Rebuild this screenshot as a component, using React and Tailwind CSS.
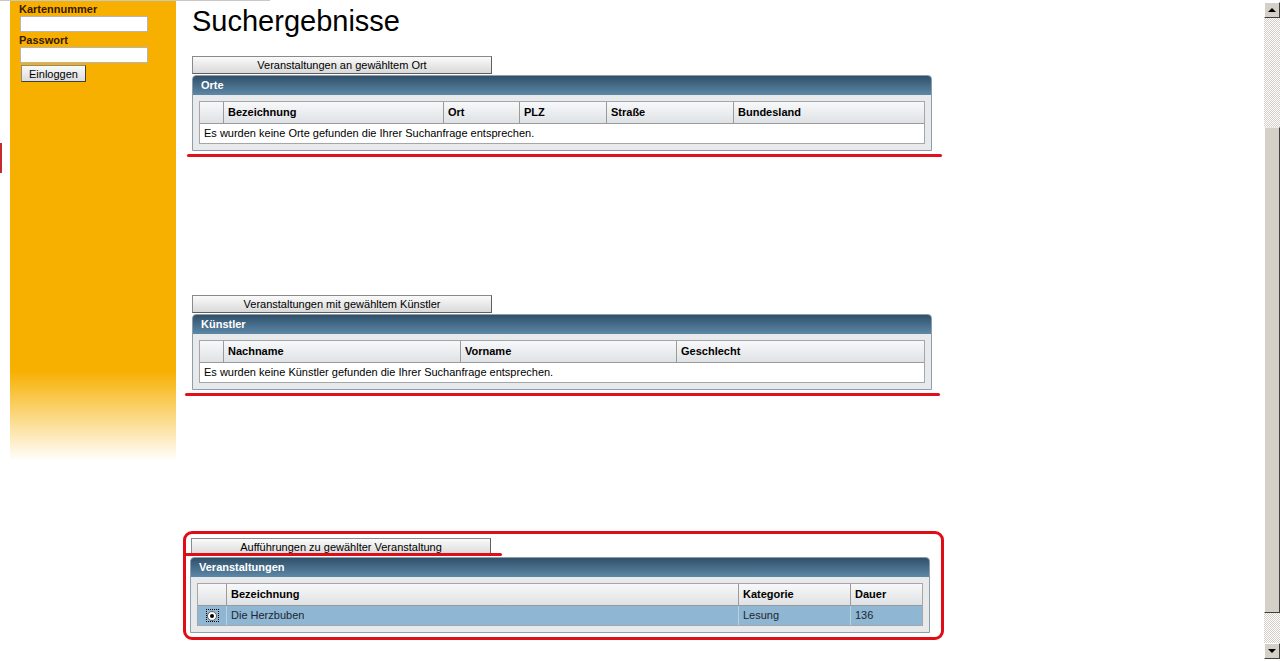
import React from 'react';

const orte = [
  { label: 'Bezeichnung', w: 'w-[220px]' },
  { label: 'Ort', w: 'w-[76px]' },
  { label: 'PLZ', w: 'w-[87px]' },
  { label: 'Straße', w: 'w-[127px]' },
  { label: 'Bundesland', w: 'flex-1' },
];

const kuenstler = [
  { label: 'Nachname', w: 'w-[237px]' },
  { label: 'Vorname', w: 'w-[216px]' },
  { label: 'Geschlecht', w: 'flex-1' },
];

const veranstaltungen = [
  { label: 'Bezeichnung', w: 'w-[512px]' },
  { label: 'Kategorie', w: 'w-[112px]' },
  { label: 'Dauer', w: 'flex-1' },
];

function ActionButton({ children }) {
  return (
    <button
      type="button"
      className="block w-[300px] h-[18px] text-[11px] leading-[16px] text-black bg-[linear-gradient(to_bottom,#fafafa,#d9d9d9)] border border-[#8a8a8a] border-b-[#5f5f5f] border-r-[#5f5f5f]"
    >
      {children}
    </button>
  );
}

function HeaderRow({ cols, first = 'w-[23px]' }) {
  return (
    <div className="flex h-[22px] border-b border-[#9a9a9a] bg-[linear-gradient(to_bottom,#f7f8f9,#dfe2e5)]">
      <div className={`${first} shrink-0`} />
      {cols.map((c) => (
        <div
          key={c.label}
          className={`${c.w} shrink-0 border-l border-[#9a9a9a] pl-[4px] text-[11px] font-bold leading-[21px] text-black`}
        >
          {c.label}
        </div>
      ))}
    </div>
  );
}

function Panel({ title, children }) {
  return (
    <div className="w-[740px] border border-[#8e9dab] rounded-t-[4px] bg-[#e7e9eb]">
      <div className="h-[19px] rounded-t-[3px] bg-[linear-gradient(to_bottom,#30506a,#5d88a7)] pl-[8px] text-[11px] font-bold leading-[18px] text-white">
        {title}
      </div>
      <div className="px-[6px] pt-[6px] pb-[6px]">{children}</div>
    </div>
  );
}

function EmptyTable({ cols, message }) {
  return (
    <div className="border border-[#a3a7ab] bg-white">
      <HeaderRow cols={cols} />
      <div className="h-[19px] pl-[4px] text-[11px] leading-[19px] text-black">{message}</div>
    </div>
  );
}

function RedLine({ offset }) {
  return <div className={`mt-[3px] ${offset} h-[3px] w-[755px] rounded-full bg-[#e1111b]`} />;
}

function Scrollbar() {
  return (
    <div className="flex w-[16px] flex-col pt-[2px]">
      <div className="flex h-[16px] items-center justify-center border border-t-white border-l-white border-b-[#404040] border-r-[#404040] bg-[#d4d0c8]">
        <div className="h-0 w-0 border-x-[4px] border-b-[4px] border-x-transparent border-b-black" />
      </div>
      <div className="h-[109px] bg-[repeating-conic-gradient(#d4d0c8_0_25%,#ffffff_0_50%)] bg-[length:2px_2px]" />
      <div className="h-[486px] border border-t-[#ece9e2] border-l-white border-b-[#404040] border-r-[#404040] bg-[#d4d0c8]" />
      <div className="h-[30px] bg-[repeating-conic-gradient(#d4d0c8_0_25%,#ffffff_0_50%)] bg-[length:2px_2px]" />
      <div className="flex h-[16px] items-center justify-center border border-t-white border-l-white border-b-[#404040] border-r-[#404040] bg-[#d4d0c8]">
        <div className="h-0 w-0 border-x-[4px] border-t-[4px] border-x-transparent border-t-black" />
      </div>
    </div>
  );
}

export default function App() {
  return (
    <div className="flex h-[661px] w-[1280px] overflow-hidden bg-white font-['Liberation_Sans',Arial,sans-serif]">
      <div className="flex flex-1 flex-col">
        <div className="h-[1px] w-[270px] bg-[#c8c8c8]" />
        <div className="flex flex-1">
          <div className="w-[10px] shrink-0 pt-[142px]">
            <div className="h-[30px] w-[2px] bg-[#c42a2e]" />
          </div>

          <aside className="h-[460px] w-[166px] shrink-0 bg-[linear-gradient(to_bottom,#f7b000_0,#f7b000_370px,#ffffff_460px)] pl-[9px] pt-[2px]">
            <label className="block text-[11px] font-bold leading-[13px] text-[#3a1800]">Kartennummer</label>
            <input
              type="text"
              className="ml-[1px] block h-[16px] w-[128px] border border-[#b5b5b5] bg-white"
            />
            <label className="mt-[2px] block text-[11px] font-bold leading-[13px] text-[#3a1800]">Passwort</label>
            <input
              type="password"
              className="ml-[1px] block h-[16px] w-[128px] border border-[#b5b5b5] bg-white"
            />
            <button
              type="button"
              className="ml-[2px] mt-[2px] block h-[17px] w-[65px] border border-[#8c8c8c] border-b-[#404040] border-r-[#404040] bg-[linear-gradient(to_bottom,#fafafa,#dcdcdc)] text-[11px] leading-[14px] text-black"
            >
              Einloggen
            </button>
          </aside>

          <main className="flex flex-col pl-[16px]">
            <h1 className="pt-[3px] text-[29px] font-normal leading-[34px] text-black">Suchergebnisse</h1>

            <div className="mt-[18px]">
              <ActionButton>Veranstaltungen an gewähltem Ort</ActionButton>
            </div>
            <div className="mt-[1px]">
              <Panel title="Orte">
                <EmptyTable cols={orte} message="Es wurden keine Orte gefunden die Ihrer Suchanfrage entsprechen." />
              </Panel>
            </div>
            <RedLine offset="ml-[-5px]" />

            <div className="mt-[138px]">
              <ActionButton>Veranstaltungen mit gewähltem Künstler</ActionButton>
            </div>
            <div className="mt-[1px]">
              <Panel title="Künstler">
                <EmptyTable cols={kuenstler} message="Es wurden keine Künstler gefunden die Ihrer Suchanfrage entsprechen." />
              </Panel>
            </div>
            <RedLine offset="ml-[-7px]" />

            <div className="relative ml-[-9px] mt-[135px] h-[109px] w-[761px] rounded-[9px] border-[3px] border-[#e00d17] pl-[5px] pt-[4px]">
              <ActionButton>Aufführungen zu gewählter Veranstaltung</ActionButton>
              <div className="absolute left-0 top-[19px] h-[3px] w-[316px] rounded-r-full bg-[#e00d17]" />
              <div className="ml-[-1px] mt-[1px]">
                <Panel title="Veranstaltungen">
                  <div className="border border-[#a3a7ab] bg-white">
                    <HeaderRow cols={veranstaltungen} first="w-[28px]" />
                    <div className="flex h-[19px] bg-[#8fb7d3] text-[11px] leading-[19px] text-[#1c2630]">
                      <div className="flex w-[28px] shrink-0 items-center justify-center">
                        <div className="flex h-[13px] w-[13px] items-center justify-center border border-dotted border-black">
                          <div className="flex h-[10px] w-[10px] items-center justify-center rounded-full border border-[#5a5a5a] bg-white">
                            <div className="h-[4px] w-[4px] rounded-full bg-black" />
                          </div>
                        </div>
                      </div>
                      <div className="w-[512px] shrink-0 border-l border-[#b7d0e2] pl-[4px]">Die Herzbuben</div>
                      <div className="w-[112px] shrink-0 border-l border-[#b7d0e2] pl-[4px]">Lesung</div>
                      <div className="flex-1 border-l border-[#b7d0e2] pl-[4px]">136</div>
                    </div>
                  </div>
                </Panel>
              </div>
            </div>
          </main>
        </div>
      </div>
      <Scrollbar />
    </div>
  );
}
